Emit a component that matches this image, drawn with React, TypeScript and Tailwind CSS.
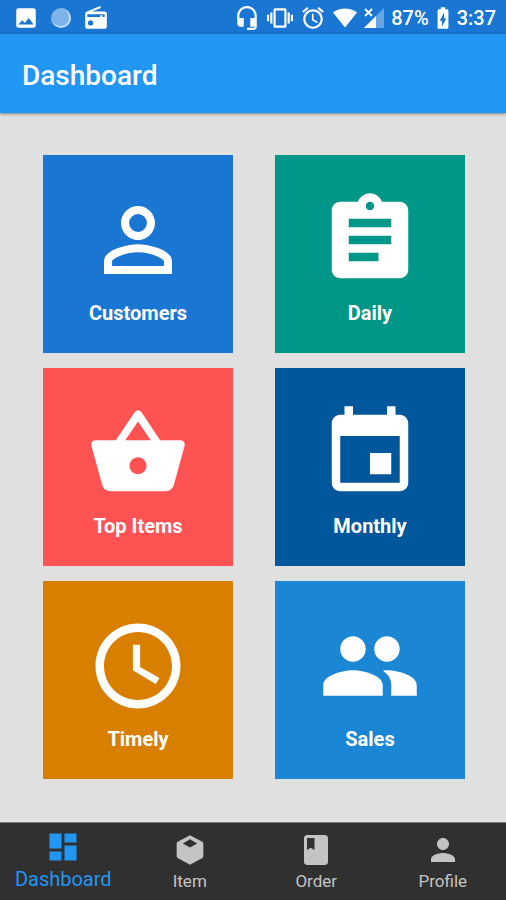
import type { ReactNode } from "react";

interface IconProps {
  path: string;
  className: string;
}

// Solid icon on a 24 unit grid
function Icon({ path, className }: IconProps) {
  return (
    <svg viewBox="0 0 24 24" fill="currentColor" className={className} aria-hidden="true">
      <path fillRule="evenodd" d={path} />
    </svg>
  );
}

const icons = {
  person:
    "M12 5.9a2.1 2.1 0 110 4.2 2.1 2.1 0 010-4.2m0 9c2.97 0 6.1 1.46 6.1 2.1v1.1H5.9V17c0-.64 3.13-2.1 6.1-2.1M12 4C9.79 4 8 5.79 8 8s1.79 4 4 4 4-1.79 4-4-1.79-4-4-4zm0 9c-2.67 0-8 1.34-8 4v3h16v-3c0-2.66-5.33-4-8-4z",
  clipboard:
    "M19 3h-4.18C14.4 1.84 13.3 1 12 1s-2.4.84-2.82 2H5c-1.1 0-2 .9-2 2v14c0 1.1.9 2 2 2h14c1.1 0 2-.9 2-2V5c0-1.1-.9-2-2-2zm-7 0c.55 0 1 .45 1 1s-.45 1-1 1-1-.45-1-1 .45-1 1-1zm2 14H7v-2h7v2zm3-4H7v-2h10v2zm0-4H7V7h10v2z",
  basket:
    "M17.21 9l-4.38-6.56c-.19-.28-.51-.42-.83-.42-.32 0-.64.14-.83.43L6.79 9H2c-.55 0-1 .45-1 1 0 .09.01.18.04.27l2.54 9.27c.23.84 1 1.46 1.92 1.46h13c.92 0 1.69-.62 1.93-1.46l2.54-9.27L23 10c0-.55-.45-1-1-1h-4.79zM9 9l3-4.4L15 9H9zm3 8c-1.1 0-2-.9-2-2s.9-2 2-2 2 .9 2 2-.9 2-2 2z",
  calendar:
    "M17 12h-5v5h5v-5zM16 1v2H8V1H6v2H5c-1.11 0-1.99.9-1.99 2L3 19c0 1.1.89 2 2 2h14c1.1 0 2-.9 2-2V5c0-1.1-.9-2-2-2h-1V1h-2zm3 18H5V8h14v11z",
  clock:
    "M11.99 2C6.47 2 2 6.48 2 12s4.47 10 9.99 10C17.52 22 22 17.52 22 12S17.52 2 11.99 2zM12 20c-4.42 0-8-3.58-8-8s3.58-8 8-8 8 3.58 8 8-3.58 8-8 8zM12.5 7h-1.7v6l5.4 3.25.85-1.4-4.55-2.6z",
  people:
    "M16 11c1.66 0 2.99-1.34 2.99-3S17.66 5 16 5s-3 1.34-3 3 1.34 3 3 3zm-8 0c1.66 0 2.99-1.34 2.99-3S9.66 5 8 5 5 6.34 5 8s1.34 3 3 3zm0 2c-2.33 0-7 1.17-7 3.5V19h14v-2.5c0-2.33-4.67-3.5-7-3.5zm8 0c-.29 0-.62.02-.97.05 1.16.84 1.97 1.97 1.97 3.45V19h6v-2.5c0-2.33-4.67-3.5-7-3.5z",
  dashboard: "M3 13h8V3H3v10zm0 8h8v-6H3v6zm10 0h8V11h-8v10zm0-18v6h8V3h-8z",
  box: "M12 2.2l8.2 4.3q.7.4.7 1.1v8.6q0 .7-.7 1.1L12 21.9l-8.2-4.6q-.7-.4-.7-1.1V7.6q0-.7.7-1.1zM12 4.9L7.2 7.6l4.8 2.7 4.8-2.7z",
  book: "M18 2H6c-1.1 0-2 .9-2 2v16c0 1.1.9 2 2 2h12c1.1 0 2-.9 2-2V4c0-1.1-.9-2-2-2zM6 4h5v8l-2.5-1.5L6 12V4z",
  profile:
    "M12 12c2.21 0 4-1.79 4-4s-1.79-4-4-4-4 1.79-4 4 1.79 4 4 4zm0 2c-2.67 0-8 1.34-8 4v2h16v-2c0-2.66-5.33-4-8-4z",
  image:
    "M21 19V5c0-1.1-.9-2-2-2H5c-1.1 0-2 .9-2 2v14c0 1.1.9 2 2 2h14c1.1 0 2-.9 2-2zM8.5 14l2.5 2.5L14.500 12l4.500 6H5z",
  radio:
    "M3.24 6.15C2.51 6.43 2 7.17 2 8v12c0 1.1.89 2 2 2h16c1.11 0 2-.9 2-2V8c0-1.11-.89-2-2-2H8.3l8.26-3.34L15.88 1 3.24 6.15zM7 19c-1.4 0-2.5-1.1-2.5-2.5S5.600 14 7 14s2.500 1.100 2.500 2.500S8.400 19 7 19zm13-8h-2V9.500h-2V11H4V8.500h16z",
  headset:
    "M12 1c-4.97 0-9 4.03-9 9v7c0 1.66 1.34 3 3 3h3v-8H5v-2c0-3.87 3.13-7 7-7s7 3.13 7 7v2h-4v8h4v1h-7v2h6c1.66 0 3-1.34 3-3V10c0-4.97-4.03-9-9-9z",
  vibration:
    "M0 15h2V9H0v6zm3 2h2V7H3v10zm19-8v6h2V9h-2zm-3 8h2V7h-2v10zM16.5 3h-9C6.67 3 6 3.67 6 4.5v15c0 .83.67 1.5 1.5 1.5h9c.83 0 1.5-.67 1.5-1.5v-15c0-.83-.67-1.5-1.5-1.5zM16 19H8V5h8v14z",
  alarm:
    "M22 5.72l-4.6-3.86-1.29 1.53 4.6 3.86L22 5.72zM7.88 3.39L6.6 1.86 2 5.71l1.29 1.53 4.59-3.85zM12.5 8H11v6l4.75 2.85.75-1.23-4-2.37V8zM12 4c-4.97 0-9 4.03-9 9s4.02 9 9 9c4.97 0 9-4.03 9-9s-4.03-9-9-9zm0 16c-3.87 0-7-3.13-7-7s3.13-7 7-7 7 3.13 7 7-3.13 7-7 7z",
  wifi: "M12 21.5L24 6.5C23.5 6.1 19 2.5 12 2.5S.5 6.1 0 6.5l12 15z",
  battery:
    "M15.67 4H14V2h-4v2H8.33C7.6 4 7 4.6 7 5.33v15.33C7 21.4 7.6 22 8.33 22h7.33c.74 0 1.34-.6 1.34-1.33V5.33C17 4.6 16.4 4 15.67 4zM11 20v-5.5H9L13 7v5.5h2L11 20z",
};

const tiles = [
  { label: "Customers", icon: icons.person, color: "bg-[#1976d2]" },
  { label: "Daily", icon: icons.clipboard, color: "bg-[#009688]" },
  { label: "Top Items", icon: icons.basket, color: "bg-[#ff5252]" },
  { label: "Monthly", icon: icons.calendar, color: "bg-[#01579b]" },
  { label: "Timely", icon: icons.clock, color: "bg-[#d97f00]" },
  { label: "Sales", icon: icons.people, color: "bg-[#1a86d4]" },
];

const tabs = [
  { label: "Dashboard", icon: icons.dashboard, active: true },
  { label: "Item", icon: icons.box, active: false },
  { label: "Order", icon: icons.book, active: false },
  { label: "Profile", icon: icons.profile, active: false },
];

function SignalIcon() {
  return (
    <svg viewBox="0 0 20 20" className="h-5 w-5" aria-hidden="true">
      <path d="M20 0v20H0z" fill="#fff" fillOpacity="0.35" />
      <path d="M12 8v12H0z" fill="#fff" />
      <path d="M1 1l7 7M8 1L1 8" stroke="#1976d2" strokeWidth="4" />
      <path d="M1 1l7 7M8 1L1 8" stroke="#fff" strokeWidth="1.8" />
    </svg>
  );
}

function StatusGroup({ children, className }: { children: ReactNode; className: string }) {
  return <div className={`flex items-center ${className}`}>{children}</div>;
}

function StatusBar() {
  return (
    <div className="flex h-[34px] items-center justify-between bg-[#1976d2] pt-[2px] pr-[10px] pl-[13px] text-white">
      <StatusGroup className="gap-3">
        <Icon path={icons.image} className="h-[26px] w-[26px]" />
        <span className="h-5 w-5 rounded-full border-r-2 border-b-2 border-[#bfe0fa] bg-[#7fb2e8]" />
        <Icon path={icons.radio} className="h-[26px] w-[26px]" />
      </StatusGroup>
      <StatusGroup className="gap-[7px]">
        <Icon path={icons.headset} className="h-[26px] w-[26px]" />
        <Icon path={icons.vibration} className="h-[26px] w-[26px]" />
        <Icon path={icons.alarm} className="h-[26px] w-[26px]" />
        <Icon path={icons.wifi} className="h-6 w-6" />
        <SignalIcon />
        <span className="text-[20px] leading-6 font-medium">87%</span>
        <Icon path={icons.battery} className="-mx-[6px] h-[26px] w-[26px]" />
        <span className="text-[20px] leading-6 font-medium">3:37</span>
      </StatusGroup>
    </div>
  );
}

export default function App() {
  return (
    <div className="flex min-h-screen flex-col bg-[#e0e0e0] font-['Roboto',sans-serif]">
      <StatusBar />

      <header className="flex h-[79px] items-center bg-[#2196f3] px-[22px] pt-1 shadow-[0_1px_3px_rgba(0,0,0,0.45)]">
        <h1 className="text-[28px] leading-8 font-medium text-white">Dashboard</h1>
      </header>

      {/* Report tiles */}
      <main className="grid grid-cols-2 gap-x-[42px] gap-y-[15px] pt-[42px] pr-[41px] pb-10 pl-[43px]">
        {tiles.map((tile) => (
          <button
            key={tile.label}
            type="button"
            className={`flex h-[198px] flex-col items-center pt-[34px] text-white ${tile.color}`}
          >
            <Icon path={tile.icon} className="h-[102px] w-[102px]" />
            <span className="mt-[10px] text-[20px] leading-6 font-bold">{tile.label}</span>
          </button>
        ))}
      </main>

      {/* Bottom navigation */}
      <nav className="mt-auto grid h-[78px] grid-cols-4 border-t border-[#777777] bg-[#303030]">
        {tabs.map((tab) => (
          <a
            key={tab.label}
            href="#"
            aria-current={tab.active ? "page" : undefined}
            className={
              tab.active
                ? "flex flex-col items-center gap-[2px] pt-[6px] text-[20px] leading-6 text-[#2196f3]"
                : "flex flex-col items-center gap-px pt-[9px] text-[17px] leading-6 text-[#c4c4c4]"
            }
          >
            <Icon path={tab.icon} className="h-9 w-9" />
            {tab.label}
          </a>
        ))}
      </nav>
    </div>
  );
}
